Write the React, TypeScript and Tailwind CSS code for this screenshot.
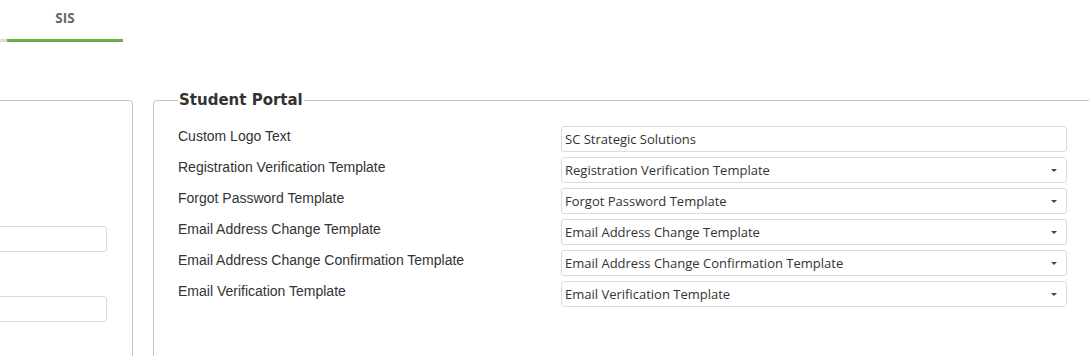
import React from 'react';

const rows: { label: string; value: string; select?: boolean }[] = [
  { label: 'Custom Logo Text', value: 'SC Strategic Solutions' },
  { label: 'Registration Verification Template', value: 'Registration Verification Template', select: true },
  { label: 'Forgot Password Template', value: 'Forgot Password Template', select: true },
  { label: 'Email Address Change Template', value: 'Email Address Change Template', select: true },
  { label: 'Email Address Change Confirmation Template', value: 'Email Address Change Confirmation Template', select: true },
  { label: 'Email Verification Template', value: 'Email Verification Template', select: true },
];

function Field({ value, select }: { value: string; select?: boolean }) {
  return (
    <div className="flex h-[26px] w-[506px] shrink-0 items-center justify-between rounded-[3px] border border-[#dcdcdc] bg-white pt-[2px] pl-[3px] pr-[9px] text-[13px] text-[#333] [font-family:'Open_Sans',sans-serif]">
      <span>{value}</span>
      {select && (
        <svg width="6" height="3" viewBox="0 0 6 3" className="-mt-[1px]">
          <path d="M0 0h6L3 3z" fill="#444" />
        </svg>
      )}
    </div>
  );
}

export default function App() {
  return (
    <div className="h-[356px] w-[1089px] overflow-hidden bg-white [font-family:'Liberation_Sans',Arial,sans-serif]">
      <div className="flex h-[42px] items-end">
        <div className="h-[3px] w-[7px] bg-[#ddd]" />
        <div className="flex h-[42px] w-[116px] flex-col">
          <div className="flex flex-1 items-center justify-center pb-[3px] text-[13.5px] font-bold text-[#666] [font-family:'Open_Sans',sans-serif]">
            SIS
          </div>
          <div className="h-[3px] bg-[#67ad45]" />
        </div>
      </div>

      <div className="mt-[50px] flex items-start gap-[20px]">
        <fieldset className="mt-[8px] -ml-[40px] h-[300px] w-[173px] shrink-0 rounded-[4px] border border-[#c4c4c4] pr-[25px] pt-[125px]">
          <div className="flex flex-col gap-[44px]">
            <div className="h-[26px] rounded-[3px] border border-[#dcdcdc]" />
            <div className="h-[26px] rounded-[3px] border border-[#dcdcdc]" />
          </div>
        </fieldset>

        <fieldset className="h-[300px] w-[960px] shrink-0 rounded-[4px] border border-[#c4c4c4] pl-[24px]">
          <legend className="px-[1px] text-[15px] leading-[16px] font-bold text-[#333] [font-family:'DejaVu_Sans',sans-serif]">
            Student Portal
          </legend>
          <div className="mt-[18px] flex flex-col gap-[5px]">
            {rows.map((r) => (
              <div key={r.label} className="flex items-start">
                <div className="w-[383px] shrink-0 text-[14px] leading-[20px] text-[#333]">{r.label}</div>
                <Field value={r.value} select={r.select} />
              </div>
            ))}
          </div>
        </fieldset>
      </div>
    </div>
  );
}
